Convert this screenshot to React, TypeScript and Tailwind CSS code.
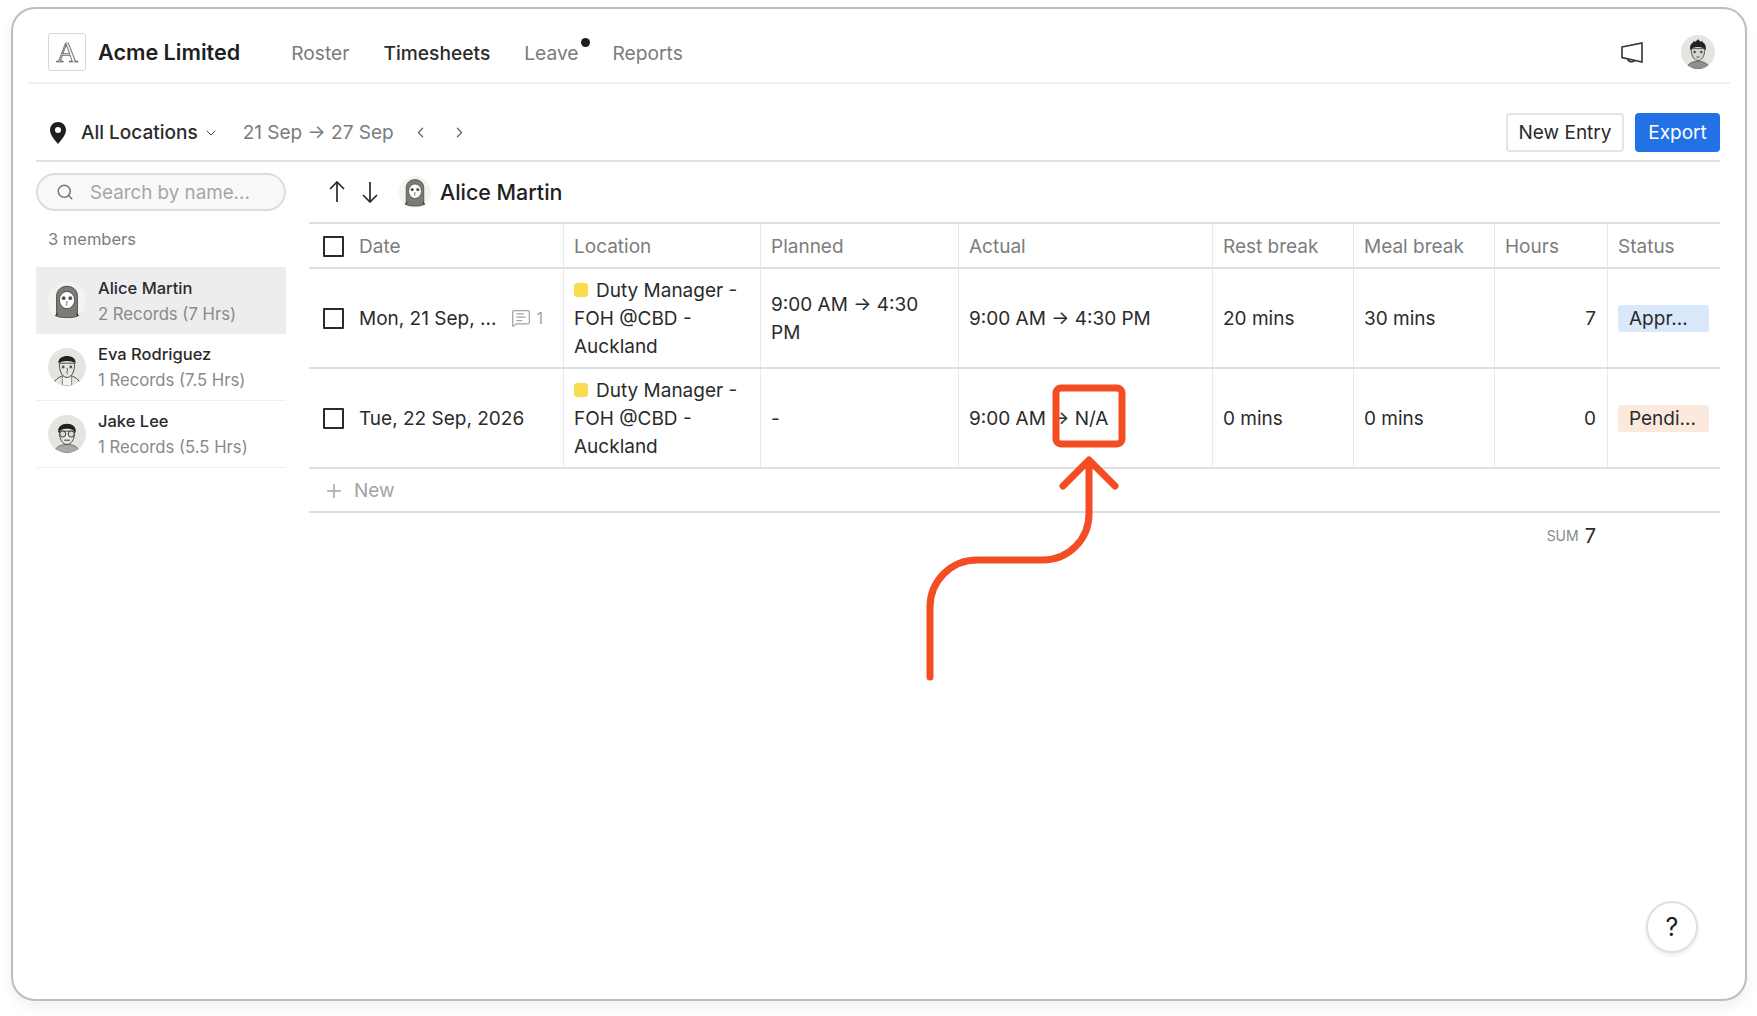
import React from "react";
import { ChevronDown, ChevronLeft, ChevronRight, MessageSquareText, Plus, Search } from "lucide-react";

function Avatar({ kind, size }: { kind: "alice" | "eva" | "jake" | "me"; size: number }) {
  const bg = kind === "alice" ? "#f3f4ef" : "#e4e5e0";
  return (
    <svg width={size} height={size} viewBox="0 0 40 40" className="shrink-0">
      <clipPath id={`clip-${kind}`}>
        <circle cx="20" cy="20" r="20" />
      </clipPath>
      <g clipPath={`url(#clip-${kind})`}>
        <rect width="40" height="40" fill={bg} />
        {kind === "alice" && (
          <>
            <path d="M9 36V15C9 1 31 1 31 15V36C27 38 13 38 9 36Z" fill="#7b7b78" stroke="#333" strokeWidth="0.8" />
            <path d="M7 37L10 33M33 37L30 33" stroke="#333" strokeWidth="1.4" />
            <ellipse cx="20" cy="19" rx="8" ry="9" fill="#fff" stroke="#333" strokeWidth="0.7" />
            <circle cx="16.5" cy="17" r="2" fill="#555" />
            <circle cx="23.5" cy="17" r="2" fill="#555" />
            <path d="M19.5 20C21.5 22 18 23 20 25" fill="none" stroke="#333" strokeWidth="0.8" />
          </>
        )}
        {kind === "eva" && (
          <>
            <path d="M6 38C8 31 14 30 17 29M34 38C32 31 26 30 23 29" fill="none" stroke="#333" strokeWidth="0.9" />
            <rect x="15" y="29" width="10" height="11" fill="#f3f3f0" stroke="#555" strokeWidth="0.7" />
            <path d="M12 16C12 27 16 31 20 31C24 31 28 27 28 16Z" fill="#e4e5e0" stroke="#333" strokeWidth="0.9" />
            <path d="M11 16C10 6 30 6 29 16C24 13 16 13 11 16Z" fill="#222" />
            <circle cx="16" cy="20" r="1.5" fill="#555" />
            <circle cx="24" cy="20" r="1.5" fill="#555" />
            <path d="M20 21C22 24 18 26 21 27" fill="none" stroke="#333" strokeWidth="0.8" />
          </>
        )}
        {kind === "jake" && (
          <>
            <path d="M6 40C8 33 14 31 20 31C26 31 32 33 34 40Z" fill="#a9a9a6" stroke="#444" strokeWidth="0.7" />
            <path d="M12 17C12 27 16 31 20 31C24 31 28 27 28 17Z" fill="#e4e5e0" stroke="#333" strokeWidth="0.9" />
            <path d="M11 19C8 6 32 6 29 19C27 13 13 13 11 19Z" fill="#222" />
            <circle cx="15.5" cy="20" r="3.2" fill="#dcdcd8" stroke="#222" strokeWidth="0.9" />
            <circle cx="24.5" cy="20" r="3.2" fill="#dcdcd8" stroke="#222" strokeWidth="0.9" />
            <path d="M17 26.5H23" stroke="#333" strokeWidth="1" />
          </>
        )}
        {kind === "me" && (
          <>
            <path d="M6 40C8 33 14 31 20 31C26 31 32 33 34 40Z" fill="#8f8f8c" stroke="#444" strokeWidth="0.7" />
            <path d="M12 16C12 26 16 30 20 30C24 30 28 26 28 16Z" fill="#d5d5d1" stroke="#333" strokeWidth="0.9" />
            <path d="M11 18C10 12 12 10 14 9L15 7L17 8L20 5L23 8L25 7L26 9C28 10 30 12 29 18C26 13 14 13 11 18Z" fill="#222" />
            <circle cx="16" cy="20" r="1.4" fill="#444" />
            <circle cx="24" cy="20" r="1.4" fill="#444" />
            <path d="M18 26H22" stroke="#333" strokeWidth="0.9" />
          </>
        )}
      </g>
    </svg>
  );
}

function Checkbox() {
  return <span className="block w-[21px] h-[21px] shrink-0 border-2 border-[#2a2a2a] rounded-[1px]" />;
}

const cols = "grid grid-cols-[255px_197px_198px_254px_141px_141px_113px_112px]";

function HeadCell({ children, last }: { children: React.ReactNode; last?: boolean }) {
  return (
    <div className={`flex items-center gap-[15px] pl-[10px] pt-[2px] text-[#7d7d7d] ${last ? "" : "border-r border-[#e9e9e9]"}`}>
      {children}
    </div>
  );
}

function Cell({ children, right }: { children: React.ReactNode; right?: boolean }) {
  return (
    <div className={`flex items-center px-[10px] pt-[2px] border-r border-[#e9e9e9] ${right ? "justify-end pr-[11px]" : ""}`}>
      {children}
    </div>
  );
}

function LocationText() {
  return (
    <p>
      <span className="inline-block w-[14px] h-[14px] mr-[8px] rounded-[3px] bg-[#f9dc4e]" />
      Duty Manager - FOH @CBD - Auckland
    </p>
  );
}

function Row({
  date,
  comment,
  planned,
  actual,
  rest,
  meal,
  hours,
  status,
  pill,
}: {
  date: string;
  comment?: boolean;
  planned: string;
  actual: string;
  rest: string;
  meal: string;
  hours: string;
  status: string;
  pill: string;
}) {
  return (
    <div className={`${cols} h-[100px] border-b-2 border-[#dfdfdf] text-[#2b2b2b]`}>
      <div className="flex items-center pl-[14px] border-r border-[#e9e9e9]">
        <Checkbox />
        <span className="ml-[15px] mt-[2px] whitespace-nowrap">{date}</span>
        {comment && (
          <span className="flex items-center ml-[15px] text-[#a3a3a3] text-[16px]">
            <MessageSquareText size={20} strokeWidth={1.5} />
            <span className="ml-[5px]">1</span>
          </span>
        )}
      </div>
      <Cell>
        <LocationText />
      </Cell>
      <Cell>{planned}</Cell>
      <Cell>{actual}</Cell>
      <Cell>{rest}</Cell>
      <Cell>{meal}</Cell>
      <Cell right>{hours}</Cell>
      <div className="flex items-center pl-[10px]">
        <span className={`w-[91px] h-[27px] pl-[11px] rounded-[3px] leading-[27px] ${pill}`}>{status}</span>
      </div>
    </div>
  );
}

function Member({
  name,
  sub,
  kind,
  active,
}: {
  name: string;
  sub: string;
  kind: "alice" | "eva" | "jake";
  active?: boolean;
}) {
  return (
    <div
      className={`flex items-center h-[67px] pl-[12px] gap-[12px] ${
        active ? "bg-[#ededed]" : "border-b border-[#eeeeee]"
      }`}
    >
      <Avatar kind={kind} size={38} />
      <div>
        <div className="text-[16.5px] leading-[26px] font-medium text-[#2b2b2b]">{name}</div>
        <div className="text-[16.7px] leading-[26px] text-[#8a8a8a]">{sub}</div>
      </div>
    </div>
  );
}

export default function App() {
  return (
    <div className="relative w-full h-[1016px] overflow-hidden bg-white pt-[7px] pl-[11px] pr-[10px] font-['Inter',sans-serif] text-[19px] leading-[28px]">
      <div className="relative h-[994px] bg-white border-2 border-[#bdbdbd] rounded-[24px] shadow-[0_6px_14px_rgba(0,0,0,0.06)]">
        <header className="flex items-center justify-between h-[75px] mx-[15px] pt-[13px] pl-[20px] pr-[15px] border-b-2 border-[#f1f1f1]">
          <div className="flex items-center">
            <div className="flex items-center justify-center w-[38px] h-[38px] border border-[#d8d8d8] rounded-[3px] font-['Liberation_Serif',serif] text-[30px] text-transparent [-webkit-text-stroke:0.7px_#333]">
              A
            </div>
            <div className="ml-[12px] text-[21.6px] font-semibold text-[#1f1f1f]">Acme Limited</div>
            <nav className="flex items-center gap-[34px] ml-[51px] mt-[1px] text-[19.2px] text-[#7b7b7b]">
              <span>Roster</span>
              <span className="font-medium text-[#2b2b2b]">Timesheets</span>
              <span className="relative">
                Leave
                <span className="absolute right-[-11px] top-[-1px] w-[9px] h-[9px] rounded-full bg-[#1f1f1f]" />
              </span>
              <span>Reports</span>
            </nav>
          </div>
          <div className="flex items-center gap-[38px]">
            <svg width="22" height="21" viewBox="0 0 22 21" fill="none" stroke="#333" strokeWidth="1.6">
              <path d="M1 5L21 1V20L1 15.5Z" />
              <path d="M7 17C7 20.5 13 20.5 14 18" />
            </svg>
            <Avatar kind="me" size={34} />
          </div>
        </header>

        <div className="ml-[23px] mr-[25px]">
          <div className="flex items-center justify-between pt-[29px] pb-[8px] border-b-2 border-[#e2e2e2]">
            <div className="flex items-center">
              <svg width="16" height="22" viewBox="0 0 16 22" className="ml-[14px]">
                <path
                  fillRule="evenodd"
                  d="M8 0C3.6 0 0 3.4 0 7.9C0 13 5 18 8 22C11 18 16 13 16 7.9C16 3.4 12.4 0 8 0ZM8 5A3 3 0 1 1 8 11A3 3 0 1 1 8 5Z"
                  fill="#1f1f1f"
                />
              </svg>
              <span className="ml-[15px] font-medium text-[#2b2b2b]">All Locations</span>
              <ChevronDown size={16} className="ml-[5px] text-[#444]" strokeWidth={1.5} />
              <span className="ml-[24px] text-[#7b7b7b]">21 Sep → 27 Sep</span>
              <ChevronLeft size={17} className="ml-[18px] text-[#666]" strokeWidth={1.8} />
              <ChevronRight size={17} className="ml-[22px] text-[#666]" strokeWidth={1.8} />
            </div>
            <div className="flex items-center gap-[11px]">
              <button className="h-[39px] w-[118px] border-2 border-[#e4e4e4] rounded-[4px] bg-white text-[#2b2b2b]">
                New Entry
              </button>
              <button className="h-[39px] w-[85px] rounded-[4px] bg-[#2272e6] text-white">Export</button>
            </div>
          </div>

          <div className="flex gap-[23px]">
            <aside className="w-[250px] shrink-0">
              <div className="flex items-center h-[38px] mt-[11px] pl-[18px] border-2 border-[#dcdcdc] rounded-full bg-[#f9f9f9] text-[18.8px] text-[#a6a6a6]">
                <Search size={18} strokeWidth={2} className="text-[#777]" />
                <span className="ml-[16px] mt-[1px]">Search by name...</span>
              </div>
              <div className="flex items-center h-[56px] pl-[12px] text-[16.5px] text-[#7d7d7d]">3 members</div>
              <Member name="Alice Martin" sub="2 Records (7 Hrs)" kind="alice" active />
              <Member name="Eva Rodriguez" sub="1 Records (7.5 Hrs)" kind="eva" />
              <Member name="Jake Lee" sub="1 Records (5.5 Hrs)" kind="jake" />
            </aside>

            <main className="flex-1 min-w-0">
              <div className="flex items-center h-[60px] pl-[19px]">
                <svg width="18" height="22" viewBox="0 0 18 22" fill="none" stroke="#2b2b2b" strokeWidth="1.7">
                  <path d="M9 1V21M2 8L9 1L16 8" />
                </svg>
                <svg width="18" height="22" viewBox="0 0 18 22" fill="none" stroke="#2b2b2b" strokeWidth="1.7" className="ml-[15px]">
                  <path d="M9 1V21M2 14L9 21L16 14" />
                </svg>
                <span className="ml-[20px]">
                  <Avatar kind="alice" size={32} />
                </span>
                <span className="ml-[9px] text-[21.4px] font-medium text-[#1f1f1f]">Alice Martin</span>
              </div>

              <div className={`${cols} h-[47px] border-t-2 border-b-2 border-[#dfdfdf]`}>
                <div className="flex items-center pl-[14px] pt-[2px] border-r border-[#e9e9e9] text-[#7d7d7d]">
                  <Checkbox />
                  <span className="ml-[15px]">Date</span>
                </div>
                <HeadCell>Location</HeadCell>
                <HeadCell>Planned</HeadCell>
                <HeadCell>Actual</HeadCell>
                <HeadCell>Rest break</HeadCell>
                <HeadCell>Meal break</HeadCell>
                <HeadCell>Hours</HeadCell>
                <HeadCell last>Status</HeadCell>
              </div>
              <Row
                date="Mon, 21 Sep, ..."
                comment
                planned="9:00 AM → 4:30 PM"
                actual="9:00 AM → 4:30 PM"
                rest="20 mins"
                meal="30 mins"
                hours="7"
                status="Appr..."
                pill="bg-[#d9e8fb]"
              />
              <Row
                date="Tue, 22 Sep, 2026"
                planned="-"
                actual="9:00 AM → N/A"
                rest="0 mins"
                meal="0 mins"
                hours="0"
                status="Pendi..."
                pill="bg-[#fbe9dd]"
              />
              <div className="flex items-center h-[44px] pl-[14px] pt-[2px] border-b-2 border-[#dfdfdf] text-[#a3a3a3]">
                <Plus size={22} strokeWidth={1.6} />
                <span className="ml-[9px]">New</span>
              </div>
              <div className="flex items-center justify-end h-[46px] pr-[124px]">
                <span className="text-[14px] text-[#8a8a8a]">SUM</span>
                <span className="ml-[6px] text-[20px] text-[#2b2b2b]">7</span>
              </div>
            </main>
          </div>
        </div>

        <button className="absolute right-[47px] bottom-[46px] w-[52px] h-[52px] rounded-full border-2 border-[#e0e0e0] bg-white text-[25px] text-[#1f1f1f] shadow-[0_2px_4px_rgba(0,0,0,0.08)]">
          ?
        </button>
      </div>

      <svg width="1757" height="1016" viewBox="0 0 1757 1016" fill="none" className="absolute left-0 top-0 pointer-events-none">
        <rect x="1056" y="388" width="66" height="56" rx="5" stroke="#f44c23" strokeWidth="7" />
        <path
          d="M930 677V607A47 47 0 0 1 977 560H1043A46 46 0 0 0 1089 514V462M1063 486L1089 460L1115 486"
          stroke="#f44c23"
          strokeWidth="7"
          strokeLinecap="round"
          strokeLinejoin="round"
        />
      </svg>
    </div>
  );
}
